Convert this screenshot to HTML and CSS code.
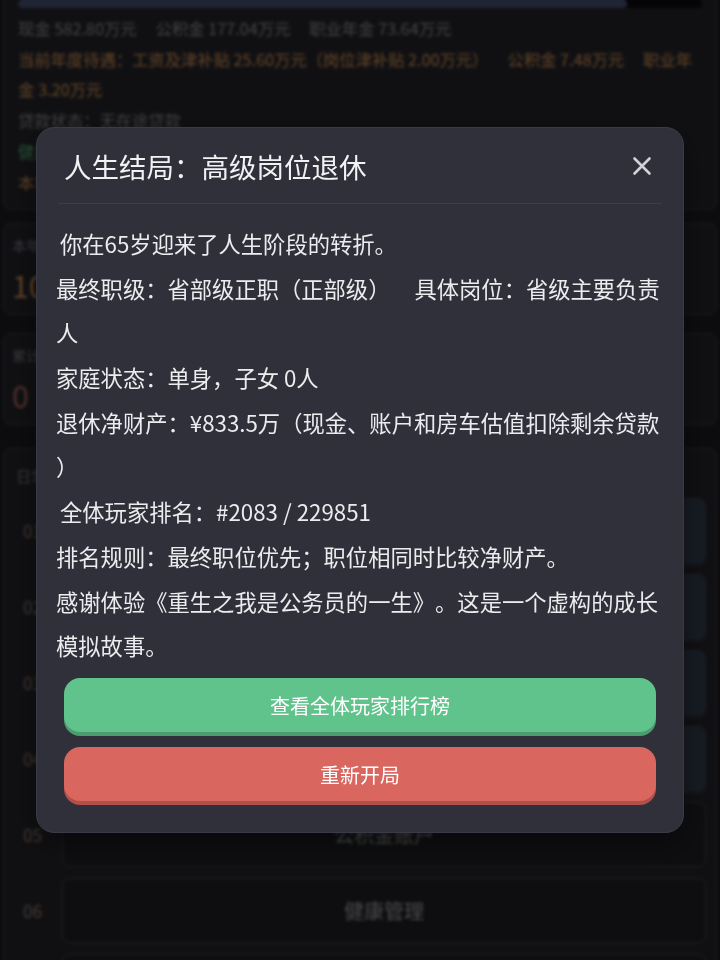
FILE: index.html
```html
<!DOCTYPE html>
<html lang="zh-CN">
<head>
    <meta charset="UTF-8">
    <meta name="viewport" content="width=device-width, initial-scale=1.0">
    <title>重生之我是公务员的一生</title>
    <link rel="stylesheet" href="styles.css">
</head>
<body>

    <div class="page">
        <div class="card status-card">
            <div class="status-title">第 38 年 · 省部级正职</div>
            <div class="progress"><div class="progress-fill"></div></div>
            <div class="line line-first muted">
                <span>现金 582.80万元</span><span class="item">公积金 177.04万元</span><span class="item">职业年金 73.64万元</span>
            </div>
            <div class="line orange"><span>当前年度待遇：工资及津补贴 25.60万元（岗位津补贴 2.00万元）</span><span class="item">公积金 7.48万元</span><span class="item">职业年金 3.20万元</span></div>
            <div class="line muted">贷款状态：无在途贷款</div>
            <div class="line green">健康状态：良好（体力 82 / 压力 35）</div>
            <div class="line orange">本年事件：年度考核优秀</div>
        </div>

        <div class="card stat-card">
            <div class="stat-label">本年收入</div>
            <div class="stat-value orange">105.28万</div>
        </div>

        <div class="card stat-card stat-card-last">
            <div class="stat-label">累计处分</div>
            <div class="stat-value red">0</div>
        </div>

        <div class="card action-card">
            <div class="action-label">日常行动</div>
            <div class="action-row"><span class="action-num">01</span><div class="action-btn active">认真工作</div></div>
            <div class="action-row"><span class="action-num">02</span><div class="action-btn active">学习提升</div></div>
            <div class="action-row"><span class="action-num">03</span><div class="action-btn active">人际关系</div></div>
            <div class="action-row"><span class="action-num">04</span><div class="action-btn active">投资理财</div></div>
            <div class="action-row"><span class="action-num">05</span><div class="action-btn">公积金账户</div></div>
            <div class="action-row"><span class="action-num">06</span><div class="action-btn">健康管理</div></div>
            <div class="action-row"><span class="action-num">07</span><div class="action-btn">家庭生活</div></div>
        </div>
    </div>

    <div class="overlay">
        <div class="modal">
            <div class="modal-header">
                <h2 class="modal-title">人生结局：高级岗位退休</h2>
                <button class="modal-close" aria-label="关闭">
                    <svg width="20" height="20" viewBox="0 0 20 20">
                        <path d="M2.5 2.5 L17.5 17.5 M17.5 2.5 L2.5 17.5" stroke="#d2d3d9" stroke-width="2.6" stroke-linecap="round"/>
                    </svg>
                </button>
            </div>
            <div class="modal-body">
                <p class="indent">你在65岁迎来了人生阶段的转折。</p>
                <p>最终职级：省部级正职（正部级）<span class="gap"></span>具体岗位：省级主要负责人</p>
                <p>家庭状态：单身，子女 0人</p>
                <p>退休净财产：¥833.5万（现金、账户和房车估值扣除剩余贷款）</p>
                <p class="indent">全体玩家排名：#2083 / 229851</p>
                <p>排名规则：最终职位优先；职位相同时比较净财产。</p>
                <p>感谢体验《重生之我是公务员的一生》。这是一个虚构的成长模拟故事。</p>
                <div class="modal-actions">
                    <button class="btn btn-green">查看全体玩家排行榜</button>
                    <button class="btn btn-red">重新开局</button>
                </div>
            </div>
        </div>
    </div>

</body>
</html>
```

FILE: styles.css
```css
* {
    box-sizing: border-box;
}

body {
    margin: 0;
    background-color: #1c1c22;
    font-family: "Noto Sans CJK SC", "Noto Sans", sans-serif;
    color: #8e8e8e;
    height: 960px;
    overflow: hidden;
    text-spacing-trim: space-all;
}

.page {
    padding: 0 3px;
    margin-top: -39px; /* scrolled down a little */
}

.card {
    background-color: #25252c;
    border: 1px solid #3e3e48;
    border-radius: 8px;
}

/* status card */
.status-card {
    padding: 10px 14px 12px;
    margin-bottom: 13px;
}

.status-title {
    font-size: 15px;
    line-height: 24px;
    margin-bottom: 4px;
}

.progress {
    height: 8px;
    background-color: #0c0d12;
    border-radius: 4px;
    overflow: hidden;
}

.progress-fill {
    width: 89%;
    height: 100%;
    background-color: #465272;
    border-radius: 4px;
}

.line {
    font-size: 16.3px;
    line-height: 30px;
    margin-top: 1px;
}

.line-first {
    margin-top: 5px;
}

.item {
    margin-left: 19px;
}

.muted { color: #8e8e8e; }
.orange { color: #d49454; }
.green { color: #5eb47c; }
.red { color: #b46c60; }

/* stat cards */
.stat-card {
    padding: 10px 8px 9px;
    margin-bottom: 18px;
}

.stat-card-last {
    margin-bottom: 23px;
}

.stat-label {
    font-size: 14px;
    line-height: 22px;
    color: #7e7e86;
}

.stat-value {
    font-size: 30px;
    line-height: 40px;
    margin-top: 9px;
}

/* actions */
.action-card {
    padding: 15px 10px 0 12px;
}

.action-label {
    font-size: 15px;
    line-height: 24px;
    color: #7e7e86;
    margin-bottom: 10px;
}

.action-row {
    display: flex;
    align-items: center;
    margin-bottom: 11px;
}

.action-num {
    width: 46px;
    padding-left: 7px;
    font-size: 17px;
    color: #947c6a;
}

.action-btn {
    flex: 1;
    height: 65px;
    display: flex;
    align-items: center;
    justify-content: center;
    font-size: 20px;
    color: #9c9c9c;
    background-color: #202027;
    border: 1px solid #42424c;
    border-radius: 8px;
}

.action-btn.active {
    background-color: #333d4e;
    border-color: #3a4557;
    box-shadow: 0 3px 0 #29313f;
    color: #a8aebb;
}

/* modal */
.overlay {
    position: fixed;
    inset: 0;
    background-color: rgba(0, 0, 0, 0.55);
    backdrop-filter: blur(1.5px);
    display: flex;
    align-items: center;
    justify-content: center;
}

.modal {
    width: 648px;
    background-color: #2f3039;
    border: 1px solid #393b45;
    border-radius: 18px;
    box-shadow: 0 10px 30px rgba(0, 0, 0, 0.4);
}

.modal-header {
    display: flex;
    align-items: center;
    justify-content: space-between;
    margin: 0 21px;
    padding: 18px 10px 17px 6px;
    border-bottom: 1px solid #3c3f49;
}

.modal-title {
    margin: 0;
    font-size: 27.5px;
    font-weight: 400;
    line-height: 40px;
    color: #f2f2f4;
}

.modal-close {
    background: none;
    border: none;
    padding: 0;
    width: 20px;
    height: 20px;
    cursor: pointer;
}

.modal-close svg {
    display: block;
}

.modal-body {
    padding: 17px 19px 31px;
}

.modal-body p {
    margin: 0 0 1px;
    font-size: 22.3px;
    line-height: 44px;
    color: #ececef;
    line-break: anywhere;
}

.modal-body p.indent {
    padding-left: 4px;
}

.gap {
    display: inline-block;
    width: 24px;
}

.modal-actions {
    display: flex;
    flex-direction: column;
    gap: 15px;
    padding: 0 8px;
    margin-top: 11px;
}

.btn {
    height: 54px;
    border: none;
    border-radius: 16px;
    font-family: inherit;
    font-size: 20px;
    color: #ffffff;
    cursor: pointer;
}

.btn-green {
    background-color: #61c38c;
    box-shadow: 0 4px 0 #4b9c6f;
}

.btn-red {
    background-color: #d9665f;
    box-shadow: 0 4px 0 #b14f49;
}
```
